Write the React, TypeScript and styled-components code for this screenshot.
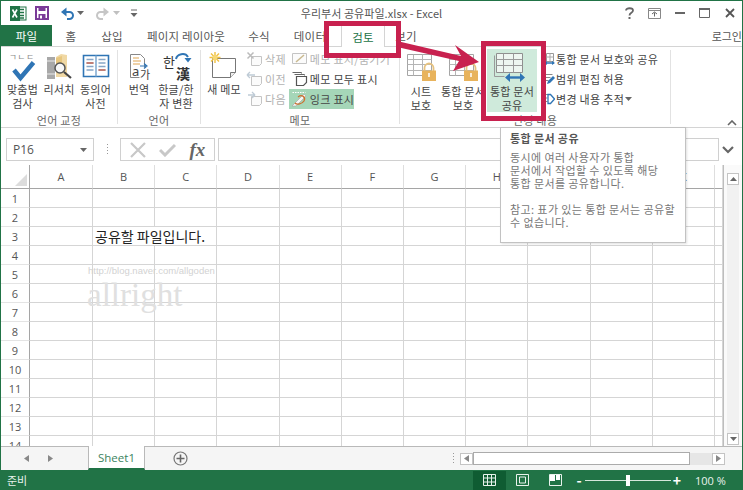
import React from "react";
import styled, { createGlobalStyle } from "styled-components";

const Global = createGlobalStyle`
  html, body { margin: 0; padding: 0; background: #fff; }
  body { font-family: "Noto Sans CJK KR", "Noto Sans", sans-serif; }
`;

const GREEN = "#217346";
const RED = "#c8214f";

const Win = styled.div`
  position: relative;
  width: 743px;
  height: 490px;
  box-sizing: border-box;
  border: 1px solid ${GREEN};
  border-bottom: 0;
  overflow: hidden;
  display: flex;
  flex-direction: column;
  background: #fff;
  color: #444;
  font-size: 11px;
`;

/* ---------- title bar ---------- */
const TitleBar = styled.div`
  height: 24px;
  display: grid;
  grid-template-columns: 1fr auto 1fr;
  align-items: center;
  flex: none;
`;
const Qat = styled.div`
  display: flex;
  align-items: center;
  padding-left: 8px;
  gap: 0;
`;
const QatSlot = styled.span<{ $w: number }>`
  width: ${(p) => p.$w}px;
  height: 18px;
  display: flex;
  align-items: center;
  justify-content: center;
  flex: none;
`;
const DocTitle = styled.div`
  font-size: 11px;
  letter-spacing: 0.05px;
  color: #555;
  white-space: nowrap;
`;
const WinControls = styled.div`
  display: flex;
  justify-content: flex-end;
`;
const WinBtn = styled.span`
  width: 25px;
  height: 20px;
  display: flex;
  align-items: center;
  justify-content: center;
  color: #666;
`;

/* ---------- tabs ---------- */
const TabRow = styled.div`
  height: 21px;
  display: flex;
  flex: none;
  align-items: stretch;
  border-bottom: 1px solid #d4d4d4;
`;
const Tab = styled.div<{ $w: number; $active?: boolean; $file?: boolean }>`
  width: ${(p) => p.$w}px;
  box-sizing: border-box;
  flex: none;
  display: flex;
  align-items: center;
  justify-content: center;
  padding-top: 1px;
  font-size: 11.5px;
  letter-spacing: 0.2px;
  white-space: nowrap;
  color: ${(p) => (p.$file ? "#fff" : p.$active ? GREEN : "#555")};
  background: ${(p) => (p.$file ? GREEN : "#fff")};
  ${(p) =>
    p.$active
      ? `border: 1px solid #d4d4d4; border-bottom: 0; height: 22px; margin-left: 1px;`
      : ""}
`;
const Login = styled.div`
  margin-left: auto;
  padding-right: 0;
  align-self: center;
  color: #555;
  font-size: 11px;
  white-space: nowrap;
`;

/* ---------- ribbon ---------- */
const Ribbon = styled.div`
  height: 81px;
  flex: none;
  display: flex;
  border-bottom: 1px solid #d4d4d4;
  box-sizing: border-box;
  position: relative;
`;
const Group = styled.div<{ $w: number }>`
  width: ${(p) => p.$w}px;
  flex: none;
  display: flex;
  flex-direction: column;
`;
const GroupBody = styled.div`
  flex: 1;
  display: flex;
  padding-top: 5px;
  min-height: 0;
`;
const GroupLabel = styled.div`
  height: 14px;
  line-height: 14px;
  text-align: center;
  font-size: 11px;
  letter-spacing: 0.3px;
  color: #666;
  flex: none;
`;
const Sep = styled.div`
  width: 1px;
  flex: none;
  margin: 3px 0 3px;
  background: #e2e2e2;
`;
const BigBtn = styled.div<{ $w: number; $hi?: boolean; $ml?: number }>`
  width: ${(p) => p.$w}px;
  margin-left: ${(p) => p.$ml ?? 0}px;
  flex: none;
  height: ${(p) => (p.$hi ? "60px" : "auto")};
  margin-top: ${(p) => (p.$hi ? "-3px" : "0")};
  padding-top: ${(p) => (p.$hi ? "3px" : "0")};
  background: ${(p) => (p.$hi ? "#cfeadb" : "transparent")};
  display: flex;
  flex-direction: column;
  align-items: center;
  svg { display: block; flex: none; overflow: visible; }
`;
const BigLabel = styled.div`
  line-height: 14px;
  font-size: 11px;
  letter-spacing: 0.2px;
  text-align: center;
  white-space: nowrap;
  color: #444;
`;
const SmallCol = styled.div<{ $ml?: number }>`
  display: flex;
  flex-direction: column;
  align-items: flex-start;
  margin-left: ${(p) => p.$ml ?? 0}px;
  margin-top: -3px;
`;
const SmallBtn = styled.div<{ $off?: boolean; $on?: boolean }>`
  height: 20px;
  display: flex;
  align-items: center;
  gap: 1px;
  white-space: nowrap;
  font-size: 11px;
  letter-spacing: 0.3px;
  color: ${(p) => (p.$off ? "#b2b2b2" : "#444")};
  background: ${(p) => (p.$on ? "#a5d6b8" : "transparent")};
  svg { flex: none; }
`;
const Collapse = styled.div`
  position: absolute;
  right: 5px;
  bottom: 1px;
  color: #666;
  display: flex;
`;

/* ---------- formula bar ---------- */
const FormulaBar = styled.div`
  height: 37px;
  flex: none;
  box-sizing: border-box;
  padding: 10px 5px 4px 5px;
  display: flex;
  align-items: stretch;
`;
const NameBox = styled.div`
  width: 88px;
  box-sizing: border-box;
  border: 1px solid #d0d0d0;
  display: flex;
  align-items: center;
  justify-content: space-between;
  padding: 0 6px;
  font-family: "Open Sans", "Noto Sans", sans-serif;
  font-size: 12px;
  color: #555;
`;
const Dots = styled.div`
  width: 26px;
  flex: none;
  display: flex;
  align-items: center;
  justify-content: center;
`;
const FxBox = styled.div`
  width: 95px;
  box-sizing: border-box;
  border: 1px solid #d0d0d0;
  display: flex;
  align-items: center;
  justify-content: space-around;
  padding: 0 2px;
`;
const FxGlyph = styled.span`
  font-family: "Liberation Serif", serif;
  font-style: italic;
  font-weight: bold;
  font-size: 19px;
  color: #666;
`;
const FormulaInput = styled.div`
  flex: 1;
  box-sizing: border-box;
  margin-left: 3px;
  border: 1px solid #d0d0d0;
`;
const FormulaDrop = styled.div`
  width: 18px;
  flex: none;
  display: flex;
  align-items: center;
  justify-content: center;
  color: #666;
`;

/* ---------- sheet ---------- */
const SheetArea = styled.div`
  flex: 1;
  min-height: 0;
  display: flex;
`;
const Grid = styled.div`
  width: 723px;
  flex: none;
  overflow: hidden;
  display: grid;
  grid-template-columns: 29px 63px repeat(10, 62.2px) 1fr;
  grid-auto-rows: 19px;
  grid-template-rows: 24px;
  border-right: 1px solid #bdbdbd;
  box-sizing: border-box;
`;
const Corner = styled.div`
  border-right: 1px solid #a5a5a5;
  border-bottom: 1px solid #a5a5a5;
  position: relative;
  &::after {
    content: "";
    position: absolute;
    right: 2px;
    bottom: 2px;
    border-style: solid;
    border-width: 0 0 12px 12px;
    border-color: transparent transparent #dcdcdc transparent;
  }
`;
const ColHead = styled.div`
  border-right: 1px solid #dedede;
  border-bottom: 1px solid #a5a5a5;
  display: flex;
  align-items: center;
  justify-content: center;
  font-family: "Open Sans", "Noto Sans", sans-serif;
  font-size: 11px;
  color: #555;
`;
const RowHead = styled.div`
  border-right: 1px solid #a5a5a5;
  border-bottom: 1px solid #e4e4e4;
  display: flex;
  align-items: center;
  justify-content: center;
  font-family: "Open Sans", "Noto Sans", sans-serif;
  font-size: 11px;
  color: #555;
`;
const Cell = styled.div<{ $open?: boolean }>`
  box-sizing: border-box;
  border-right: ${(p) => (p.$open ? "0" : "1px solid #d5d5d5")};
  border-bottom: 1px solid #d5d5d5;
  white-space: nowrap;
  font-size: 14px;
  line-height: 18px;
  color: #222;
  padding-left: 2px;
`;
const VScroll = styled.div`
  flex: 1;
  display: flex;
  flex-direction: column;
  align-items: center;
  padding: 8px 0 1px;
  box-sizing: border-box;
  background: #fafafa;
`;
const VTrack = styled.div`
  flex: 1;
  width: 12px;
  background: #f1f1f1;
`;
const ScrollBtn = styled.div<{ $w?: number }>`
  width: ${(p) => p.$w ?? 12}px;
  height: 12px;
  flex: none;
  box-sizing: border-box;
  border: 1px solid #c4c4c4;
  background: #fff;
  display: flex;
  align-items: center;
  justify-content: center;
`;

/* ---------- sheet tabs ---------- */
const SheetBar = styled.div`
  height: 24px;
  flex: none;
  display: flex;
  align-items: stretch;
  background: #f5f5f5;
  border-top: 1px solid #b9b9b9;
  box-sizing: border-box;
`;
const NavArrows = styled.div`
  width: 87px;
  flex: none;
  display: flex;
  align-items: center;
  gap: 19px;
  padding-left: 23px;
  box-sizing: border-box;
`;
const SheetTab = styled.div`
  width: 57px;
  flex: none;
  margin-top: -1px;
  box-sizing: border-box;
  background: #fff;
  border-left: 1px solid #b9b9b9;
  border-right: 1px solid #b9b9b9;
  border-bottom: 2px solid ${GREEN};
  display: flex;
  align-items: center;
  justify-content: center;
  color: #3c8460;
  font-family: "Open Sans", "Noto Sans", sans-serif;
  font-size: 11.5px;
`;
const AddSheet = styled.div`
  margin-left: 28px;
  display: flex;
  align-items: center;
`;
const BarDots = styled.div`
  margin-left: auto;
  width: 14px;
  display: flex;
  align-items: center;
  justify-content: center;
`;
const HScroll = styled.div`
  width: 265px;
  margin-right: 17px;
  flex: none;
  display: flex;
  align-items: center;
`;
const HThumb = styled.div`
  width: 217px;
  height: 13px;
  box-sizing: border-box;
  background: #fff;
  border: 1px solid #ababab;
  flex: none;
`;
const HTrack = styled.div`
  flex: 1;
  height: 12px;
  background: #e6e6e6;
`;

/* ---------- status bar ---------- */
const StatusBar = styled.div`
  height: 20px;
  flex: none;
  margin: 0 -1px;
  background: ${GREEN};
  display: flex;
  align-items: center;
  color: #e8f2ec;
  font-size: 11px;
`;
const Ready = styled.div`
  padding-left: 7px;
`;
const ViewBtn = styled.div<{ $active?: boolean; $first?: boolean }>`
  width: 33px;
  height: 19px;
  display: flex;
  align-items: center;
  justify-content: center;
  background: ${(p) => (p.$active ? "#0f5c32" : "transparent")};
  margin-left: ${(p) => (p.$first ? "auto" : "0")};
`;
const Zoom = styled.div`
  display: flex;
  align-items: center;
  margin-left: 2px;
`;
const ZoomLine = styled.div`
  position: relative;
  width: 86px;
  height: 1px;
  background: #d5e7dc;
  margin: 0 1px;
`;
const ZoomKnob = styled.div`
  position: absolute;
  left: 41px;
  top: -5px;
  width: 4px;
  height: 11px;
  background: #fff;
`;
const ZoomSign = styled.span`
  color: #fff;
  font-size: 14px;
  font-weight: bold;
  width: 10px;
  text-align: center;
  line-height: 14px;
`;
const Percent = styled.div`
  margin-left: 13px;
  width: 48px;
  font-family: "Open Sans", "Noto Sans", sans-serif;
  font-size: 11px;
  color: #e8f2ec;
  white-space: nowrap;
`;

/* ---------- overlays ---------- */
const RedBox = styled.div<{ $l: number; $t: number; $w: number; $h: number }>`
  position: absolute;
  left: ${(p) => p.$l}px;
  top: ${(p) => p.$t}px;
  width: ${(p) => p.$w}px;
  height: ${(p) => p.$h}px;
  box-sizing: border-box;
  border: 5px solid ${RED};
  pointer-events: none;
`;
const Arrow = styled.svg`
  position: absolute;
  left: 0;
  top: 0;
  pointer-events: none;
`;
const Tooltip = styled.div`
  position: absolute;
  left: 499px;
  top: 126px;
  width: 186px;
  height: 116px;
  box-sizing: border-box;
  padding: 3px 9px;
  background: #fff;
  border: 1px solid #c2c2c2;
  box-shadow: 1px 1px 2px rgba(0, 0, 0, 0.12);
  font-size: 11px;
  line-height: 13px;
  color: #777;
  letter-spacing: 0.4px;
  white-space: nowrap;
`;
const TipTitle = styled.div`
  font-weight: 700;
  color: #555;
  margin-bottom: 5px;
  line-height: 15px;
`;
const WaterUrl = styled.div`
  position: absolute;
  left: 87px;
  top: 264px;
  font-family: "Liberation Sans", sans-serif;
  font-size: 9.5px;
  color: #d2d2d2;
  white-space: nowrap;
`;
const WaterName = styled.div`
  position: absolute;
  left: 86px;
  top: 275px;
  font-family: "Liberation Serif", serif;
  font-size: 33px;
  line-height: 38px;
  color: #e0e0e0;
  white-space: nowrap;
`;

/* ---------- icons ---------- */
const Caret = ({ c = "#777" }: { c?: string }) => (
  <svg width="7" height="4" viewBox="0 0 7 4"><path d="M0 0h7L3.5 4z" fill={c} /></svg>
);
const ExcelLogo = () => (
  <svg width="17" height="15" viewBox="0 0 17 15">
    <rect x="5" y="1" width="11" height="13" fill="#fff" stroke="#217346" />
    <path d="M10 3.500h4M10 6.500h4M10 9.500h4M10 12h4" stroke="#217346" strokeWidth="1.400" />
    <rect x="0" y="0" width="10" height="15" fill="#217346" />
    <path d="M2.500 3.500l4.500 8M7 3.500l-4.500 8" stroke="#fff" strokeWidth="1.600" />
  </svg>
);
const SaveIcon = () => (
  <svg width="14" height="14" viewBox="0 0 14 14">
    <path d="M1 1h12v12H1z" fill="#fff" stroke="#7a3a98" strokeWidth="2" />
    <rect x="3.500" y="1" width="7" height="4" fill="#7a3a98" />
    <rect x="3.500" y="8" width="7" height="5" fill="#7a3a98" />
    <rect x="5" y="9.500" width="2" height="3" fill="#fff" />
  </svg>
);
const UndoIcon = ({ c, flip }: { c: string; flip?: boolean }) => (
  <svg width="15" height="13" viewBox="0 0 15 13" style={flip ? { transform: "scaleX(-1)" } : undefined}>
    <path d="M3 5h6.500a3.500 3.500 0 0 1 0 7H7" fill="none" stroke={c} strokeWidth="2" />
    <path d="M6.500 0.500L1 5l5.500 4.500z" fill={c} />
  </svg>
);
const Customize = () => (
  <svg width="8" height="9" viewBox="0 0 8 9">
    <path d="M1 1h6" stroke="#666" />
    <path d="M0.500 4h7L4 8z" fill="#666" />
  </svg>
);
const Spell = () => (
  <svg width="32" height="30" viewBox="0 0 32 30">
    <text x="2" y="8" fontSize="8.500" fill="#888" letterSpacing="0.800" fontFamily="Noto Sans CJK KR">ㄱㄴㄷ</text>
    <path d="M7 18l6.500 8L26.500 10.500" fill="none" stroke="#2f75b5" strokeWidth="4.500" />
  </svg>
);
const Research = () => (
  <svg width="32" height="30" viewBox="0 0 32 30">
    <path d="M4 5h8v22H4z" fill="#a8a8a8" />
    <path d="M4 9h8M4 22h8" stroke="#e8e8e8" />
    <path d="M13 5l5-3 6 1v22h-11z" fill="#f0d8a4" />
    <path d="M13 6l6-2v10h-6z" fill="#e7c67e" />
    <circle cx="17" cy="16" r="5" fill="#f7f7f7" stroke="#555" strokeWidth="1.500" />
    <path d="M21 20l7 6" stroke="#444" strokeWidth="2.200" />
  </svg>
);
const Thesaurus = () => (
  <svg width="32" height="30" viewBox="0 0 32 30">
    <path d="M3.500 3.500h25v21h-25z" fill="#fff" stroke="#2f75b5" strokeWidth="1.600" />
    <path d="M16 3.500v21" stroke="#7da7cf" strokeWidth="1.500" />
    <path d="M6.500 7.500h7M6.500 11h7M6.500 14.500h7M6.500 18h7M18.500 7.500h7M18.500 11h7M18.500 14.500h7M18.500 18h7" stroke="#86a6c6" strokeWidth="1.300" />
    <path d="M6.500 11h7M18.500 18h7" stroke="#cc6a55" strokeWidth="1.300" />
  </svg>
);
const Translate = () => (
  <svg width="32" height="30" viewBox="0 0 32 30">
    <path d="M7.500 2.500h10l4 4v9M7.500 2.500v23h9" fill="#fff" stroke="#888" />
    <path d="M10 6h6M10 9h8M10 12h7" stroke="#e0a552" strokeWidth="1.200" />
    <path d="M17 14h6m-2-2.500l3 2.500-3 2.500" fill="none" stroke="#2f75b5" strokeWidth="1.200" />
    <text x="9" y="24" fontSize="13" fill="#444" fontFamily="Noto Sans">a</text>
    <text x="17" y="27" fontSize="11" fill="#444" fontFamily="Noto Sans CJK KR">가</text>
  </svg>
);
const Hanja = () => (
  <svg width="34" height="30" viewBox="0 0 34 30">
    <text x="4" y="15" fontSize="13" fill="#333" fontFamily="Noto Sans CJK KR">한</text>
    <text x="17" y="27" fontSize="14" fontWeight="700" fill="#333" fontFamily="Noto Sans CJK KR">漢</text>
    <path d="M17 7C18 2 26 0 29 5" fill="none" stroke="#2f75b5" strokeWidth="2" />
    <path d="M25.500 6h7L29 10.500z" fill="#2f75b5" />
  </svg>
);
const NewMemo = () => (
  <svg width="32" height="30" viewBox="0 0 32 30">
    <path d="M4.500 6.500h23v14l-5 5h-18z" fill="#fff" stroke="#777" />
    <path d="M27.500 20.500h-5v5" fill="#eee" stroke="#777" />
    <g stroke="#f0c040" strokeWidth="1.400">
      <path d="M7 0v11M1.500 5.500h11M3 1.500l8 8M11 1.500l-8 8" />
    </g>
    <circle cx="7" cy="5.500" r="2.500" fill="#f6d875" />
  </svg>
);
const MiniMemo = ({ mark }: { mark: "x" | "l" | "r" }) => (
  <svg width="18" height="16" viewBox="0 0 18 16">
    <path d="M5.500 5.500h10v7l-2 2h-8z" fill="#fbfbfb" stroke="#c4c4c4" />
    {mark === "x" && <path d="M1.500 1.500l6 6M7.500 1.500l-6 6" stroke="#bbb" strokeWidth="1.500" />}
    {mark === "l" && <path d="M1 4h8M1 4l3-3M1 4l3 3" fill="none" stroke="#bfcbd6" strokeWidth="1.300" />}
    {mark === "r" && <path d="M2 4h7M9 4L6 1M9 4L6 7" fill="none" stroke="#bfcbd6" strokeWidth="1.300" />}
  </svg>
);
const ShowHide = () => (
  <svg width="20" height="16" viewBox="0 0 20 16">
    <path d="M3.500 2.500h14v10h-14z" fill="#fbfbfb" stroke="#c4c4c4" />
    <path d="M7 11l8-7" stroke="#c9b98f" strokeWidth="1.500" />
  </svg>
);
const ShowAll = () => (
  <svg width="20" height="16" viewBox="0 0 20 16">
    <path d="M3.500 1.500h9v1M5.500 3.500h10v1" fill="none" stroke="#666" />
    <path d="M7.500 5.500h10v6l-3 3h-7z" fill="#fff" stroke="#555" strokeWidth="1.200" />
  </svg>
);
const Ink = () => (
  <svg width="20" height="16" viewBox="0 0 20 16">
    <path d="M3.500 1.500h13" stroke="#fff" strokeDasharray="1.500 1" />
    <path d="M3 15L15 3l2 2L7 15z" fill="#f6f6f6" stroke="#999" strokeWidth="0.500" />
    <path d="M9 6c4-3 8 0 6 4-2 3-7 4-9 2" fill="none" stroke="#cd6f2e" strokeWidth="1.300" />
  </svg>
);
const Sheet = ({ children }: { children?: React.ReactNode }) => (
  <svg width="36" height="32" viewBox="0 0 36 32">
    <path d="M4.500 2.500h24v21h-24z" fill="#fff" stroke="#a5a5a5" />
    <path d="M4.500 7.500h24M4.500 12.500h24M4.500 18.500h24M10.500 2.500v21M19.500 2.500v21" stroke="#b5b5b5" />
    {children}
  </svg>
);
const Lock = () => (
  <g>
    <path d="M21.500 19v-3a4.500 4.500 0 0 1 9 0v3" fill="none" stroke="#e6c27f" strokeWidth="1.800" />
    <rect x="19" y="18.500" width="14" height="10.500" fill="#e8b35c" />
    <path d="M26 21v4" stroke="#fff" strokeWidth="1.500" />
  </g>
);
const ShareArrows = () => (
  <svg width="44" height="32" viewBox="0 0 44 32">
    <path d="M6.500 1.500h26v19h-26z" fill="#eef6f1" stroke="#8f8f8f" />
    <path d="M6.500 7.500h26M6.500 13.500h26M13.500 1.500v19M23.500 1.500v19M4.500 3.500v21h10" fill="none" stroke="#9a9a9a" />
    <path d="M18 25.500h14" stroke="#2f75b5" strokeWidth="2.400" />
    <path d="M20 21v9l-5-4.500zM30 21v9l5-4.500z" fill="#2f75b5" />
  </svg>
);
const MiniShare = () => (
  <svg width="11" height="14" viewBox="0 0 11 14">
    <path d="M2.500 1.500h7v8h-7z" fill="#fff" stroke="#999" />
    <path d="M2.500 5h7M6 1.500v8" stroke="#aaa" />
    <path d="M1 11h9" stroke="#2f75b5" strokeWidth="1.500" />
    <path d="M3 9v4l-3-2zM8 9v4l3-2z" fill="#2f75b5" />
  </svg>
);
const MiniRange = () => (
  <svg width="11" height="14" viewBox="0 0 11 14">
    <path d="M.5 2.500h8M.5 5.500h6M.5 8.500h4" stroke="#888" />
    <path d="M3 12l1-3 5-5 2 2-5 5z" fill="#2f75b5" />
  </svg>
);
const MiniTrack = () => (
  <svg width="11" height="14" viewBox="0 0 11 14">
    <path d="M.5 2.500h5M.5 6h3M.5 9.500h3" stroke="#888" />
    <path d="M4 2.500h2.500l4 4.500-4 4.500H4z" fill="#fff" stroke="#2f75b5" strokeWidth="1.300" />
  </svg>
);
const Mini = ({ d }: { d: string }) => (
  <svg width="5" height="7" viewBox="0 0 5 7"><path d={d} fill="#888" /></svg>
);
const VDots = () => (
  <svg width="3" height="11" viewBox="0 0 3 11">
    <path d="M1 0h1v1H1zM1 3h1v1H1zM1 6h1v1H1zM1 9h1v1H1z" fill="#999" />
  </svg>
);

const colLetters = ["A", "B", "C", "D", "E", "F", "G", "H", "I", "J", "K", ""];
const rows = Array.from({ length: 14 }, (_, i) => i + 1);

export default function App() {
  return (
    <Win>
      <Global />
      <TitleBar>
        <Qat>
          <QatSlot $w={18}><ExcelLogo /></QatSlot>
          <QatSlot $w={7} />
          <QatSlot $w={16}><SaveIcon /></QatSlot>
          <QatSlot $w={9} />
          <QatSlot $w={17}><UndoIcon c="#2f75b5" /></QatSlot>
          <QatSlot $w={9}><Caret c="#666" /></QatSlot>
          <QatSlot $w={9} />
          <QatSlot $w={17}><UndoIcon c="#c6c6c6" flip /></QatSlot>
          <QatSlot $w={10}><Caret c="#c0c0c0" /></QatSlot>
          <QatSlot $w={8} />
          <QatSlot $w={9}><Customize /></QatSlot>
        </Qat>
        <DocTitle>우리부서 공유파일.xlsx - Excel</DocTitle>
        <WinControls>
          <WinBtn>
            <svg width="9" height="12" viewBox="0 0 9 12"><path d="M1 3.500C1 0.500 8 0.500 8 3.500 8 6 4.500 5.500 4.500 8.500" fill="none" stroke="#666" strokeWidth="1.800" /><path d="M3.500 10h2v2h-2z" fill="#666" /></svg>
          </WinBtn>
          <WinBtn>
            <svg width="13" height="11" viewBox="0 0 13 11"><path d="M.5.500h12v10H.5z" fill="none" stroke="#888" /><path d="M.5 2.500h12" stroke="#888" /><path d="M6.500 8.500v-4M4 6l2.500-2L9 6" fill="none" stroke="#666" /></svg>
          </WinBtn>
          <WinBtn>
            <svg width="10" height="2" viewBox="0 0 10 2"><path d="M0 0h10v2H0z" fill="#666" /></svg>
          </WinBtn>
          <WinBtn>
            <svg width="11" height="10" viewBox="0 0 11 10"><path d="M.5 1.500h10v8H.5z" fill="none" stroke="#666" /><path d="M0 0h11v2H0z" fill="#666" /></svg>
          </WinBtn>
          <WinBtn>
            <svg width="10" height="10" viewBox="0 0 10 10"><path d="M1 1l8 8M9 1L1 9" stroke="#555" strokeWidth="1.800" /></svg>
          </WinBtn>
        </WinControls>
      </TitleBar>

      <TabRow>
        <Tab $w={51} $file>파일</Tab>
        <Tab $w={38}>홈</Tab>
        <Tab $w={44}>삽입</Tab>
        <Tab $w={104}>페이지 레이아웃</Tab>
        <Tab $w={42}>수식</Tab>
        <Tab $w={60}>데이터</Tab>
        <Tab $w={44} $active>검토</Tab>
        <Tab $w={42}>보기</Tab>
        <Login>로그인</Login>
      </TabRow>

      <Ribbon>
        <Group $w={116}>
          <GroupBody>
            <BigBtn $w={37} $ml={3}><Spell /><BigLabel>맞춤법<br />검사</BigLabel></BigBtn>
            <BigBtn $w={36}><Research /><BigLabel>리서치</BigLabel></BigBtn>
            <BigBtn $w={37}><Thesaurus /><BigLabel>동의어<br />사전</BigLabel></BigBtn>
          </GroupBody>
          <GroupLabel>언어 교정</GroupLabel>
        </Group>
        <Sep />
        <Group $w={82}>
          <GroupBody>
            <BigBtn $w={36} $ml={3}><Translate /><BigLabel>번역</BigLabel></BigBtn>
            <BigBtn $w={38}><Hanja /><BigLabel>한글/한<br />자 변환</BigLabel></BigBtn>
          </GroupBody>
          <GroupLabel>언어</GroupLabel>
        </Group>
        <Sep />
        <Group $w={198}>
          <GroupBody>
            <BigBtn $w={44} $ml={1}><NewMemo /><BigLabel>새 메모</BigLabel></BigBtn>
            <SmallCol>
              <SmallBtn $off><MiniMemo mark="x" />삭제</SmallBtn>
              <SmallBtn $off><MiniMemo mark="l" />이전</SmallBtn>
              <SmallBtn $off><MiniMemo mark="r" />다음</SmallBtn>
            </SmallCol>
            <SmallCol $ml={3}>
              <SmallBtn $off><ShowHide />메모 표시/숨기기</SmallBtn>
              <SmallBtn><ShowAll />메모 모두 표시</SmallBtn>
              <SmallBtn $on><Ink />잉크 표시</SmallBtn>
            </SmallCol>
          </GroupBody>
          <GroupLabel>메모</GroupLabel>
        </Group>
        <Sep />
        <Group $w={270}>
          <GroupBody>
            <BigBtn $w={42}><Sheet><Lock /></Sheet><BigLabel>시트<br />보호</BigLabel></BigBtn>
            <BigBtn $w={42}><Sheet><Lock /></Sheet><BigLabel>통합 문서<br />보호</BigLabel></BigBtn>
            <BigBtn $w={50} $ml={3} $hi><ShareArrows /><BigLabel>통합 문서<br />공유</BigLabel></BigBtn>
            <SmallCol $ml={7}>
              <SmallBtn><MiniShare />통합 문서 보호와 공유</SmallBtn>
              <SmallBtn><MiniRange />범위 편집 허용</SmallBtn>
              <SmallBtn><MiniTrack />변경 내용 추적 <Caret c="#666" /></SmallBtn>
            </SmallCol>
          </GroupBody>
          <GroupLabel>변경 내용</GroupLabel>
        </Group>
        <Sep />
        <Collapse>
          <svg width="10" height="6" viewBox="0 0 10 6"><path d="M1 5l4-4 4 4" fill="none" stroke="#666" strokeWidth="1.600" /></svg>
        </Collapse>
      </Ribbon>

      <FormulaBar>
        <NameBox>P16<Caret c="#666" /></NameBox>
        <Dots><VDots /></Dots>
        <FxBox>
          <svg width="16" height="16" viewBox="0 0 16 16"><path d="M1 1l14 14M15 1L1 15" stroke="#c8c8c8" strokeWidth="2.200" /></svg>
          <svg width="17" height="14" viewBox="0 0 17 14"><path d="M1 7l5 5L16 2" fill="none" stroke="#c8c8c8" strokeWidth="3" /></svg>
          <FxGlyph>fx</FxGlyph>
        </FxBox>
        <FormulaInput />
        <FormulaDrop>
          <svg width="12" height="8" viewBox="0 0 12 8"><path d="M1 1l5 5 5-5" fill="none" stroke="#666" strokeWidth="2.200" /></svg>
        </FormulaDrop>
      </FormulaBar>

      <SheetArea>
        <Grid>
          <Corner />
          {colLetters.map((c, i) => <ColHead key={i}>{c}</ColHead>)}
          {rows.map((r) => (
            <React.Fragment key={r}>
              <RowHead>{r}</RowHead>
              {colLetters.map((c, i) =>
                r === 3 && c === "B" ? (
                  <Cell key={i} $open>공유할 파일입니다.</Cell>
                ) : (
                  <Cell key={i} />
                )
              )}
            </React.Fragment>
          ))}
        </Grid>
        <VScroll>
          <ScrollBtn><svg width="7" height="4" viewBox="0 0 7 4"><path d="M0 4h7L3.500 0z" fill="#666" /></svg></ScrollBtn>
          <VTrack />
          <ScrollBtn><Caret c="#666" /></ScrollBtn>
        </VScroll>
      </SheetArea>

      <SheetBar>
        <NavArrows>
          <Mini d="M5 0v7L0 3.500z" />
          <Mini d="M0 0v7l5-3.500z" />
        </NavArrows>
        <SheetTab>Sheet1</SheetTab>
        <AddSheet>
          <svg width="15" height="15" viewBox="0 0 15 15">
            <circle cx="7.500" cy="7.500" r="6.500" fill="none" stroke="#777" strokeWidth="1.200" />
            <path d="M7.500 3.500v8M3.500 7.500h8" stroke="#666" strokeWidth="1.600" />
          </svg>
        </AddSheet>
        <BarDots><VDots /></BarDots>
        <HScroll>
          <ScrollBtn $w={13}><Mini d="M5 0v7L0 3.500z" /></ScrollBtn>
          <HThumb />
          <HTrack />
          <ScrollBtn $w={13}><Mini d="M0 0v7l5-3.500z" /></ScrollBtn>
        </HScroll>
      </SheetBar>

      <StatusBar>
        <Ready>준비</Ready>
        <ViewBtn $first $active>
          <svg width="13" height="12" viewBox="0 0 13 12"><path d="M.5.500h12v11H.5zM.5 4h12M.5 8h12M4.500.500v11M8.500.500v11" fill="none" stroke="#e8f2ec" /></svg>
        </ViewBtn>
        <ViewBtn>
          <svg width="13" height="12" viewBox="0 0 13 12"><path d="M.5.500h12v11H.5z" fill="none" stroke="#e8f2ec" /><path d="M3.500 3h6v6h-6z" fill="none" stroke="#e8f2ec" /></svg>
        </ViewBtn>
        <ViewBtn>
          <svg width="13" height="12" viewBox="0 0 13 12"><path d="M.5.500h12v11H.5z" fill="none" stroke="#e8f2ec" /><path d="M1 1h5v6H1zM7 1h4v5H7z" fill="#fff" /></svg>
        </ViewBtn>
        <Zoom>
          <ZoomSign>-</ZoomSign>
          <ZoomLine><ZoomKnob /></ZoomLine>
          <ZoomSign>+</ZoomSign>
        </Zoom>
        <Percent>100 %</Percent>
      </StatusBar>

      <WaterUrl>http://blog.naver.com/allgoden</WaterUrl>
      <WaterName>allright</WaterName>

      <Tooltip>
        <TipTitle>통합 문서 공유</TipTitle>
        동시에 여러 사용자가 통합<br />
        문서에서 작업할 수 있도록 해당<br />
        통합 문서를 공유합니다.<br />
        <br />
        참고: 표가 있는 통합 문서는 공유할<br />
        수 없습니다.
      </Tooltip>

      <Arrow width="743" height="130" viewBox="0 0 743 130">
        <polygon points="396,40 460,55 454,44 478,61 452,70 458,60 396,46" fill={RED} />
      </Arrow>
      <RedBox $l={323} $t={20} $w={77} $h={37} />
      <RedBox $l={480} $t={40} $w={65} $h={80} />
    </Win>
  );
}
